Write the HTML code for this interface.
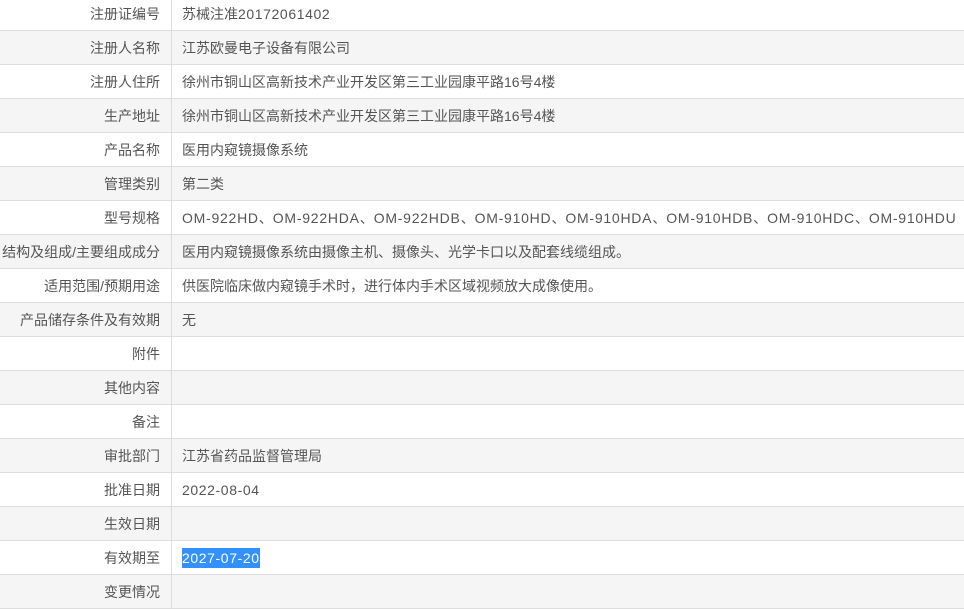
<!DOCTYPE html>
<html><head><meta charset="utf-8"><style>
body{margin:0;width:964px;height:590px;overflow:hidden;background:#fff;font-family:"Liberation Sans","Noto Sans CJK SC",sans-serif;font-size:14px;color:#555;}
table{position:absolute;top:-3px;left:0;border-collapse:collapse;width:964px;}
td{height:33px;border-bottom:1px solid #ddd;padding:0;white-space:nowrap;}
td.l{width:160px;padding-right:11px;text-align:right;border-right:1px solid #ddd;}
td.v{padding-left:10px;}
tr:nth-child(even) td{background:#f5f5f5;}
.sel{background:#3390ff;color:#fff;padding:2px 0;}
.n{letter-spacing:0.6px;}
.m{letter-spacing:0.75px;}
</style></head><body><table>
<tr><td class="l">注册证编号</td><td class="v">苏械注准<span class="n">20172061402</span></td></tr>
<tr><td class="l">注册人名称</td><td class="v">江苏欧曼电子设备有限公司</td></tr>
<tr><td class="l">注册人住所</td><td class="v">徐州市铜山区高新技术产业开发区第三工业园康平路16号4楼</td></tr>
<tr><td class="l">生产地址</td><td class="v">徐州市铜山区高新技术产业开发区第三工业园康平路16号4楼</td></tr>
<tr><td class="l">产品名称</td><td class="v">医用内窥镜摄像系统</td></tr>
<tr><td class="l">管理类别</td><td class="v">第二类</td></tr>
<tr><td class="l">型号规格</td><td class="v"><span class="m">OM-922HD</span>、<span class="m">OM-922HDA</span>、<span class="m">OM-922HDB</span>、<span class="m">OM-910HD</span>、<span class="m">OM-910HDA</span>、<span class="m">OM-910HDB</span>、<span class="m">OM-910HDC</span>、<span class="m">OM-910HDU</span></td></tr>
<tr><td class="l">结构及组成/主要组成成分</td><td class="v">医用内窥镜摄像系统由摄像主机、摄像头、光学卡口以及配套线缆组成。</td></tr>
<tr><td class="l">适用范围/预期用途</td><td class="v">供医院临床做内窥镜手术时，进行体内手术区域视频放大成像使用。</td></tr>
<tr><td class="l">产品储存条件及有效期</td><td class="v">无</td></tr>
<tr><td class="l">附件</td><td class="v"></td></tr>
<tr><td class="l">其他内容</td><td class="v"></td></tr>
<tr><td class="l">备注</td><td class="v"></td></tr>
<tr><td class="l">审批部门</td><td class="v">江苏省药品监督管理局</td></tr>
<tr><td class="l">批准日期</td><td class="v"><span class="n">2022-08-04</span></td></tr>
<tr><td class="l">生效日期</td><td class="v"></td></tr>
<tr><td class="l">有效期至</td><td class="v"><span class="sel n">2027-07-20</span></td></tr>
<tr><td class="l">变更情况</td><td class="v"></td></tr>
</table></body></html>
